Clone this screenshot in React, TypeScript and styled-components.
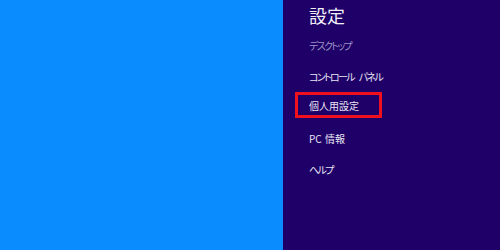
import styled, { createGlobalStyle } from "styled-components";

const GlobalStyle = createGlobalStyle`
	html, body {
		margin: 0;
		padding: 0;
	}
	body {
		font-family: "Noto Sans CJK JP", "Noto Sans", sans-serif;
	}
`;

const Screen = styled.div`
	display: flex;
	width: 500px;
	height: 250px;
	overflow: hidden;
`;

const Desktop = styled.div`
	width: 283px;
	background: #0b8cfe;
`;

const Charm = styled.div`
	flex: 1;
	background: #1f0068;
	padding: 6px 0 0 12px;
	display: flex;
	flex-direction: column;
	font-feature-settings: "palt";
`;

const Title = styled.h1`
	margin: 0 0 8px 14px;
	font-size: 18px;
	line-height: 18px;
	font-weight: 400;
	color: #f1eff8;
`;

const Menu = styled.ul`
	list-style: none;
	margin: 0;
	padding: 0;
	display: flex;
	flex-direction: column;
	gap: 5px;
`;

const Item = styled.li<{ $active?: boolean; $muted?: boolean }>`
	box-sizing: border-box;
	width: 87px;
	height: 26px;
	padding: 0 0 0 11px;
	border: 3px solid ${(props) => (props.$active ? "#f0101e" : "transparent")};
	margin: ${(props) => (props.$active ? "-2px 0 2px" : "0")};
	display: flex;
	align-items: center;
	font-size: 10px;
	color: ${(props) => (props.$muted ? "#9d95c6" : "#e8e5f3")};
`;

const Label = styled.span`
	white-space: pre;
	word-spacing: 1px;
`;

// katakana in the original font is much narrower than in Noto
const Kana = styled.span`
	letter-spacing: -1.7px;
	margin-right: 1.7px;
`;

const items = [
	{ label: "デスクトップ", muted: true },
	{ label: "コントロール パネル" },
	{ label: "個人用設定", active: true },
	{ label: "PC 情報" },
	{ label: "ヘルプ" },
];

function renderLabel(label: string) {
	return label
		.split(/([\u30A0-\u30FF]+)/)
		.filter(Boolean)
		.map((part, i) =>
			/[\u30A0-\u30FF]/.test(part) ? <Kana key={i}>{part}</Kana> : part
		);
}

function App() {
	return (
		<>
			<GlobalStyle />
			<Screen>
				<Desktop />
				<Charm>
					<Title>設定</Title>
					<Menu>
						{items.map((item) => (
							<Item key={item.label} $active={item.active} $muted={item.muted}>
								<Label>{renderLabel(item.label)}</Label>
							</Item>
						))}
					</Menu>
				</Charm>
			</Screen>
		</>
	);
}

export default App;
